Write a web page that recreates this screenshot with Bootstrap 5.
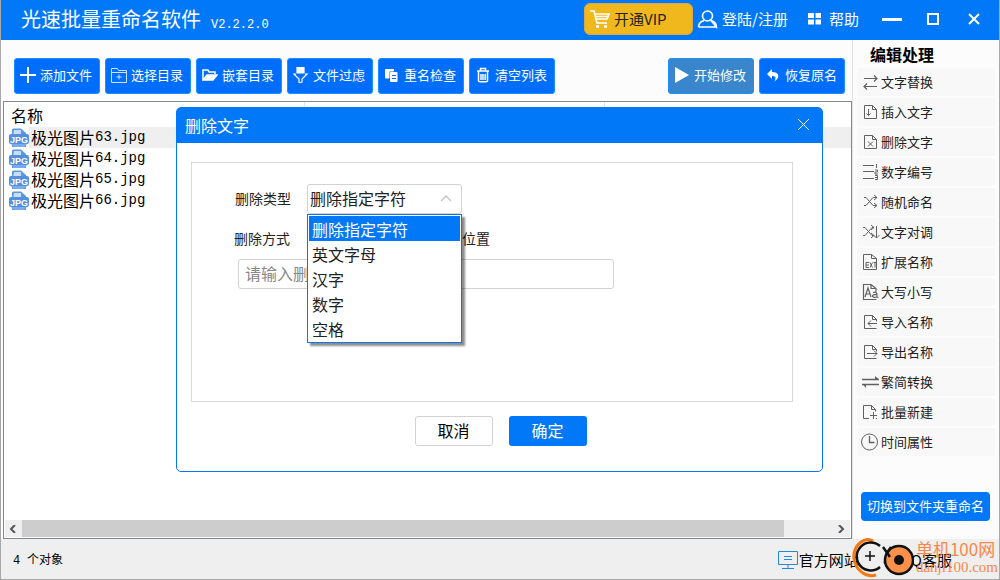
<!DOCTYPE html>
<html lang="zh-CN">
<head>
<meta charset="utf-8">
<meta name="viewport" content="width=device-width, initial-scale=1">
<title>光速批量重命名软件</title>
<link rel="stylesheet" href="https://cdn.jsdelivr.net/npm/bootstrap@5.3.0/dist/css/bootstrap.min.css">
<style>
:root { --brand: #0078f8; --tool: #006efc; --frame: #828790; --cell: 21px; }
body { font-family: "Noto Sans CJK SC", sans-serif; font-size: 13px; line-height: 20px; color: #000; background: #fcfcfc; }
.app { min-height: 100vh; border: solid #a8a8a8; border-width: 0 1px 1px; }
button svg, a svg, .side-item svg { flex: none; }
svg { display: block; fill: none; stroke: currentColor; }
.mono { font-family: "Liberation Mono", "Noto Sans CJK SC", monospace; }

.titlebar { background: var(--brand); height: 40px; color: #fff; padding: 0 19px 2px 20px; }
.titlebar h1 { font-size: 20px; line-height: 28px; font-weight: 400; margin: 0; }
.titlebar .version { font-size: 12px; padding: 12px 0 0 10px; }
.titlebar a, .titlebar button { color: #fff; text-decoration: none; font-size: 15px; border: 0; background: none; padding: 0; }
.titlebar .vip { background: #f0b81c; color: #222; width: 109px; height: 32px; border-radius: 6px; padding: 0 5px; border: 1px solid #d8a848; }
.vip svg { color: #fff; }
.winctl { margin-left: 23px; gap: 21px; }

.toolbar { padding: 18px 7px 7px 13px; gap: 5px; }
.tool { width: 86px; height: 36px; padding: 0 5px 2px; gap: 4px; border-radius: 3px; color: #fff; font-size: 13px; line-height: 20px; background: var(--tool); border: 1px solid #1c90ff; white-space: nowrap; }
.tool:hover { background: var(--brand); color: #fff; }
.tool.start { background: #3a86cc; }

.files { margin: 0 0 0 2px; border: 1px solid var(--frame); background: #fff; }
.file-table { table-layout: fixed; width: 100%; font-size: 16px; line-height: 20px; border-collapse: separate; border-spacing: 0; }
.file-table th { font-weight: 400; height: 25px; padding: 0 7px; border-right: 1px solid #e5e5e5; }
.file-table th:last-child { border: 0; }
.file-table td { height: var(--cell); padding: 0 2px; vertical-align: middle; }
.file-table td > div { height: var(--cell); }
.file-table td:first-child { padding: 0 0 0 5px; }
.file-table tr.current td:not(:first-child) { background: #efefef; }
.file-table .mono { font-size: 14px; line-height: 20px; }
.c-icon { width: 25px; } .c-name { width: 276px; } .c-col { width: 300px; }
.hbar { height: 17px; background: #efefef; margin: 0 1px 1px; }
.hbar .thumb { background: #cdcdcd; }
.hbar button { border: 0; background: none; width: 17px; padding: 0 4px; color: #555; }

.dialog { position: absolute; top: 5px; left: 172px; right: 28px; height: 365px; border: 1px solid var(--brand); border-radius: 5px; background: #fff; font-size: 14px; color: #222; }
.dialog header { height: 35px; background: var(--brand); color: #fff; padding: 0 12px 2px 8px; border-radius: 3px 3px 0 0; }
.dialog h2 { font-size: 16px; line-height: 24px; font-weight: 400; margin: 0; }
.dialog .form-box { margin: 19px 29px 0 14px; border: 1px solid #d8d8d8; height: 240px; padding: 21px 42px; }
.field { height: 30px; }
.field > label { width: 73px; padding: 0 0 2px 1px; }
.field > span { padding-bottom: 2px; }
.way { margin: 10px 0 5px; gap: 172px; }
.combo { width: 155px; }
.combo .form-select { height: 30px; padding: 0 2px 2px; font-size: 16px; line-height: 24px; color: #222; border: 1px solid #d2d2d2; border-radius: 3px; background-image: none; }
.combo .chev { position: absolute; right: 10px; top: 11px; color: #c8c8c8; }
.combo .menu { position: absolute; top: 30px; left: 0; width: 155px; padding: 1px; border: 1px solid var(--brand); background: #fff; box-shadow: 3px 3px 2px rgba(0,0,0,.45); z-index: 5; list-style: none; }
.menu button { display: block; width: 100%; height: 25px; border: 0; background: #fff; padding: 0 3px; font-size: 16px; line-height: 24px; text-align: left; color: #222; }
.menu button.active { background: var(--brand); color: #fff; }
.dialog .keyword { width: 376px; height: 30px; margin: 0 0 0 4px; padding: 0 6px 2px; font-size: 16px; border: 1px solid #d2d2d2; border-radius: 3px; }
.keyword::placeholder { color: #888; }
.dialog .ok, .dialog .cancel { width: 78px; height: 30px; padding: 0 0 3px; font-size: 16px; line-height: 24px; border-radius: 3px; }
.dialog .cancel { border: 1px solid #d2d2d2; background: #fff; color: #000; }
.dialog .ok { border: 0; background: var(--brand); color: #fff; }
.actions { gap: 16px; padding: 14px 0 0 2px; }

.side { width: 147px; border-left: 1px solid #e4e4e4; padding: 3px 4px 18px; }
.side h2 { font-size: 16px; line-height: 22px; font-weight: 700; padding-left: 13px; margin: 0 0 3px; }
.side-item { height: 28px; margin-bottom: 2px; border: 0; background: #f8f8f8; border-radius: 3px; padding: 0 4px; gap: 1px; color: #222; text-align: left; }
.side-item svg { color: #606060; }
.switch { width: 129px; height: 29px; margin-left: 4px; padding: 0 0 1px; background: var(--brand); color: #fff; border: 0; border-radius: 4px; font-size: 13px; line-height: 20px; white-space: nowrap; }

.status { height: 40px; background: #efefef; padding: 2px 47px 0 12px; font-size: 12px; }
.status a { color: #000; text-decoration: none; font-size: 15px; gap: 1px; }
.status a svg { color: #2288d8; }
.stamp { position: absolute; right: 1px; bottom: 0; color: #f88848; gap: 2px; }
.stamp strong { display: block; font-weight: 400; font-size: 17px; line-height: 19px; }
.stamp span { display: block; font-family: "Liberation Serif", serif; font-size: 15px; line-height: 19px; }
</style>
</head>
<body>
<svg class="d-none" aria-hidden="true">
  <symbol id="jpg" viewBox="0 0 20 20">
    <path d="M3 2q0-1.500 1.500-1.500H12L17 5v14H3z" fill="#5a98e0" stroke="none"/>
    <path d="M5 2h7v4h4v2H4z" fill="#c8def8" stroke="none"/>
    <rect x="0" y="6" width="20" height="10" rx="2" fill="#5490dc" stroke="none"/>
    <path d="M2 16h16l-3 3H5z" fill="#78acee" stroke="none"/>
    <text x="10" y="14.500" font-family="Liberation Sans" font-weight="700" font-size="9" text-anchor="middle" fill="#fff" stroke="none">JPG</text>
  </symbol>
</svg>
<div class="app d-flex flex-column">
  <header class="titlebar d-flex align-items-center">
    <h1>光速批量重命名软件</h1>
    <span class="version mono">V2.2.2.0</span>
    <button class="vip d-flex align-items-center gap-1 ms-auto" type="button">
      <svg width="20" height="20" viewBox="0 0 20 20" stroke-width="1.700"><path d="M0 2h4l3 12h10M5 5h14l-2 5H6M6 7.500h12"/><path d="M6 17.500h3M14 17.500h3" stroke-width="2.500"/></svg>
      开通VIP
    </button>
    <a class="d-flex align-items-center gap-1 ms-1" href="#">
      <svg width="21" height="20" viewBox="0 0 21 20" stroke-width="1.600"><circle cx="10.500" cy="7" r="5"/><path d="M1.500 18c0-3.500 2-5.500 5.500-6.500M14 11.500c3.500 1 5.500 3 5.500 6.500zM1.500 18h18"/></svg>
      登陆/注册
    </a>
    <a class="d-flex align-items-center gap-2 ms-3 ps-1" href="#">
      <svg width="13" height="12" viewBox="0 0 13 12" stroke="none"><path d="M0 0h6v5H0zM7.500 0h5.500v5H7.500zM0 6.500h6v5H0zM7.500 6.500h5.500v5H7.500z" fill="#fff" stroke="none"/></svg>
      帮助
    </a>
    <div class="winctl d-flex align-items-center">
      <button type="button" aria-label="最小化"><svg width="20" height="14" stroke-width="3"><path d="M0 7.500h20"/></svg></button>
      <button type="button" class="ms-1" aria-label="最大化"><svg width="12" height="12" stroke-width="2"><path d="M1 1h10v10H1z"/></svg></button>
      <button type="button" class="ms-2" aria-label="关闭"><svg width="12" height="12" stroke-width="2"><path d="M1 1l10 10M11 1L1 11"/></svg></button>
    </div>
  </header>

  <div class="d-flex flex-grow-1">
    <main class="d-flex flex-column flex-grow-1">
      <div class="toolbar d-flex">
        <button class="tool d-flex align-items-center" type="button"><svg width="16" height="16" stroke-width="2"><path d="M0 8h16M8 0v16"/></svg>添加文件</button>
        <button class="tool d-flex align-items-center" type="button"><svg width="16" height="16" opacity=".8"><path d="M.5 15.500V1.500h6l1 2h8v12zM.5 5.500h15M8 7.500v5M5.500 10h5"/></svg>选择目录</button>
        <button class="tool d-flex align-items-center" type="button"><svg width="16" height="16" stroke-width="1.500"><path d="M1 13V3h5l1 2h6v2"/><path d="M1 13l4-5h10l-4 5z" fill="#fff"/></svg>嵌套目录</button>
        <button class="tool d-flex align-items-center" type="button"><svg width="16" height="16" stroke-width="1.200"><path d="M4 0h7v6H4z" fill="#fff"/><path d="M3 7H.8L6 12v4l3-1v-3l5-5h-2"/></svg>文件过虑</button>
        <button class="tool d-flex align-items-center" type="button"><svg width="16" height="16" viewBox="0 0 16 16"><path d="M1.500 2.500h8V4H5v7H1.500z" fill="#fff"/><path d="M6.500 5.500H13v9H6.500z" fill="#fff"/><path d="M8 8.500h4M8 11.500h4" stroke="#006efc"/></svg>重名检查</button>
        <button class="tool d-flex align-items-center" type="button"><svg width="16" height="16" stroke-width="1.500"><path d="M2 4h12M5.500 4V1.500h5V4M3.500 4.500v9.500c0 1 9 1 9 0V4.500M6 7v6M8 7v6M10.200 7v6"/></svg>清空列表</button>
        <button class="tool start d-flex align-items-center ms-auto" type="button"><svg width="16" height="16"><path d="M1 0l14 8-14 8z" fill="#fff" stroke="none"/></svg>开始修改</button>
        <button class="tool d-flex align-items-center" type="button"><svg width="16" height="16"><path d="M2 7l5-5v3c8 0 8 6 2.500 9.500 2-4 .8-5.500-2.500-5.500v3z" fill="#fff" stroke="none"/></svg>恢复原名</button>
      </div>

      <section class="files position-relative d-flex flex-column flex-grow-1">
        <table class="file-table">
          <colgroup><col class="c-icon"><col class="c-name"><col class="c-col"><col></colgroup>
          <thead><tr><th colspan="2">名称</th><th></th><th></th></tr></thead>
          <tbody>
            <tr class="current"><td><svg width="20" height="20"><use href="#jpg"/></svg></td><td><div class="d-flex">极光图片<span class="mono">63.jpg</span></div></td><td></td><td></td></tr>
            <tr><td><svg width="20" height="20"><use href="#jpg"/></svg></td><td><div class="d-flex">极光图片<span class="mono">64.jpg</span></div></td><td></td><td></td></tr>
            <tr><td><svg width="20" height="20"><use href="#jpg"/></svg></td><td><div class="d-flex">极光图片<span class="mono">65.jpg</span></div></td><td></td><td></td></tr>
            <tr><td><svg width="20" height="20"><use href="#jpg"/></svg></td><td><div class="d-flex">极光图片<span class="mono">66.jpg</span></div></td><td></td><td></td></tr>
          </tbody>
        </table>
        <div class="hbar d-flex mt-auto">
          <button type="button" aria-label="向左滚动"><svg width="8" height="8" stroke-width="2"><path d="M6 0L2 4l4 4"/></svg></button>
          <div class="flex-grow-1 d-flex"><div class="thumb" style="width:94%"></div></div>
          <button type="button" aria-label="向右滚动"><svg width="8" height="8" stroke-width="2"><path d="M2 0l4 4-4 4"/></svg></button>
        </div>

        <div class="dialog" role="dialog" aria-labelledby="dlg-title">
          <header class="d-flex align-items-center justify-content-between">
            <h2 id="dlg-title">删除文字</h2>
            <button class="border-0 bg-transparent text-white p-0" type="button" aria-label="关闭"><svg width="13" height="13"><path d="M1 1l11 11M12 1L1 12"/></svg></button>
          </header>
          <div class="form-box">
            <div class="field d-flex align-items-center">
              <label for="kind">删除类型</label>
              <div class="combo position-relative">
                <select class="form-select" id="kind"><option>删除指定字符</option></select>
                <svg class="chev" width="12" height="7" stroke-width="1.500"><path d="M1 6l5-5 5 5"/></svg>
                <ul class="menu m-0">
                  <li><button class="active" type="button">删除指定字符</button></li>
                  <li><button type="button">英文字母</button></li>
                  <li><button type="button">汉字</button></li>
                  <li><button type="button">数字</button></li>
                  <li><button type="button">空格</button></li>
                </ul>
              </div>
            </div>
            <div class="field way d-flex align-items-center">
              <span>删除方式</span><span>位置</span>
            </div>
            <input class="keyword d-block" type="text" aria-label="删除内容" placeholder="请输入删">
          </div>
          <div class="actions d-flex justify-content-center">
            <button class="cancel" type="button">取消</button>
            <button class="ok" type="button">确定</button>
          </div>
        </div>
      </section>
    </main>

    <aside class="side d-flex flex-column flex-shrink-0">
      <h2>编辑处理</h2>
      <button class="side-item d-flex align-items-center" type="button"><svg width="19" height="16" stroke-width="1.200"><path d="M3 4.500h13M13 1.500l3 3-3 3M16 12.500H3M6 9.500l-3 3 3 3"/></svg>文字替换</button>
      <button class="side-item d-flex align-items-center" type="button"><svg width="19" height="16"><path d="M3.500 1.500h8l4 4v9h-12zM11.500 1.500v4h4M7.500 5v7M5.500 9.500l2 2 2-2"/></svg>插入文字</button>
      <button class="side-item d-flex align-items-center" type="button"><svg width="19" height="16"><path d="M3.500 1.500h8l4 4v9h-12zM11.500 1.500v4h4M7 7.500l5 5M12 7.500l-5 5"/></svg>删除文字</button>
      <button class="side-item d-flex align-items-center" type="button"><svg width="19" height="16"><path d="M2 1.500h11M2 7.500h11M2 14.500h11M15.500 0v4M14 6h2.500v2H14v2h3M14 11.500h2.500v4H14M14 13.500h2"/></svg>数字编号</button>
      <button class="side-item d-flex align-items-center" type="button"><svg width="19" height="16"><path d="M3 3.500h2l7 8h4M3 11.500h2l7-8h4M13 1l3 2.500L13 6M13 9l3 2.500-3 2.500"/></svg>随机命名</button>
      <button class="side-item d-flex align-items-center" type="button"><svg width="19" height="16"><path d="M2 3.500h2l7 8h2M2 11.500h2l7-8h2M10 1l3 2.500L10 6M10 9l3 2.500-3 2.500M15.500 2v12M12.500 11l3 3 3-3"/></svg>文字对调</button>
      <button class="side-item d-flex align-items-center" type="button"><svg width="19" height="16"><path d="M2.500 15.500v-15h8l5 4v11zM10.500.5v4h5M5 8.500v5M8 8.500H5M8 11H5M8 13.500H5M9 8.500l2.500 5M11.500 8.500l-2.500 5M12.500 8.500h3M14 8.500v5"/></svg>扩展名称</button>
      <button class="side-item d-flex align-items-center" type="button"><svg width="19" height="16"><path d="M10 .5H2.500v15h13M10 .5l5 4v3M10 .5v4h5M4 13L7 4l3 9M5 10h4M12 8.500c4-1 4 0 4 5M16 10.500c-6-.5-6 4 0 2.500l1.500.5" stroke-width="1.200"/></svg>大写小写</button>
      <button class="side-item d-flex align-items-center" type="button"><svg width="19" height="16"><path d="M15.500 14.500h-12v-13h8l4 4v2M11.500 1.500v4h4M16 9.500H7M10 6.500l-3 3 3 3"/></svg>导入名称</button>
      <button class="side-item d-flex align-items-center" type="button"><svg width="19" height="16"><path d="M15.500 14.500h-12v-13h8l4 4v2M11.500 1.500v4h4M6 9.500h10M13 6.500l3 3-3 3"/></svg>导出名称</button>
      <button class="side-item d-flex align-items-center" type="button"><svg width="19" height="16" stroke-width="1.300"><path d="M1 5.500h17M18 10.500H1"/><path d="M14 2l4 3.500h-4zM5 14l-3-3.500h3z" fill="currentColor" stroke="none"/></svg>繁简转换</button>
      <button class="side-item d-flex align-items-center" type="button"><svg width="19" height="16"><path d="M8 14.500H2.500v-13h8l4 4v2M10.500 1.500v4h4M12.500 8v7M9 11.500h7M15 14.500h1"/></svg>批量新建</button>
      <button class="side-item d-flex align-items-center" type="button"><svg width="19" height="18"><circle cx="8.500" cy="9" r="8"/><path d="M8.500 3v6.500h5" stroke-width="1.300"/></svg>时间属性</button>
      <button class="switch mt-auto" type="button">切换到文件夹重命名</button>
    </aside>
  </div>

  <footer class="status position-relative d-flex align-items-center">
    <span><span class="mono me-1">4</span> 个对象</span>
    <a class="d-flex align-items-center ms-auto" href="#"><svg width="20" height="18"><path d="M.5.500h19v13H.5zM6 5.500h8M6 8.500h8M10 13.500v4M4 17.500h12"/></svg>官方网站</a>
    <a class="d-flex align-items-center ms-4" href="#"><svg width="16" height="18"><path d="M8 0c4 0 5 3 5 6 4 5 3 8 0 7 0 5-10 5-10 0-3 1-4-2 0-7 0-3 1-6 5-6z" fill="#3a98dc" stroke="none"/></svg>QQ客服</a>
    <div class="stamp d-flex align-items-center">
      <svg width="62" height="42" viewBox="0 0 62 42">
        <path d="M21 4C13-1 1 8 2 21c1 12 12 20 22 17" stroke="#f87810" stroke-width="3"/>
        <path d="M28 9A14 14 0 1 0 28 30" stroke="#111" stroke-width="2.500"/>
        <path d="M18 14v10M13 19h10" stroke="#111" stroke-width="1.500"/>
        <circle cx="47" cy="23" r="14" fill="#fc9048" stroke="#111" stroke-width="2.500"/>
        <path d="M31 10l7 10M39 10l-4 6" stroke="#111" stroke-width="2.500"/>
        <circle cx="47" cy="23" r="5" fill="#111" stroke="none"/>
      </svg>
      <div><strong>单机100网</strong><span>danji100.com</span></div>
    </div>
  </footer>
</div>
<script src="https://cdn.jsdelivr.net/npm/bootstrap@5.3.0/dist/js/bootstrap.bundle.min.js"></script>
</body>
</html>
